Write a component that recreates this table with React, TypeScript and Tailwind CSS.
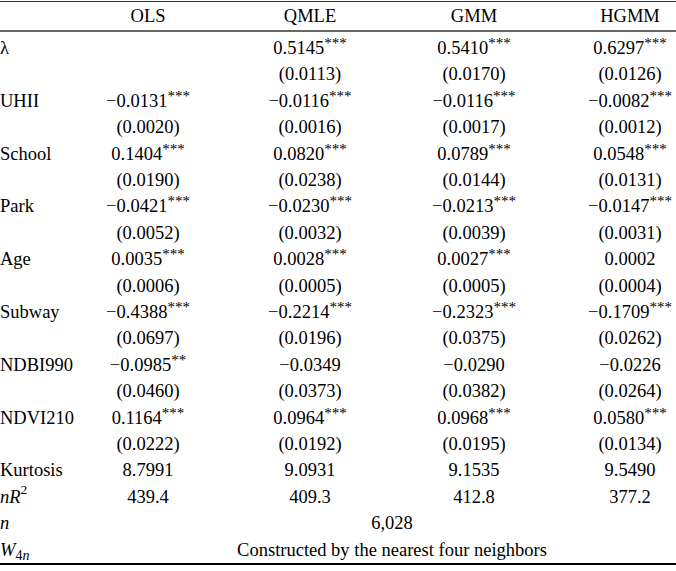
import type { ReactNode } from "react";

type Row = { label: ReactNode; vals?: string[]; span?: string };

const rows: Row[] = [
  { label: "λ", vals: ["", "0.5145***", "0.5410***", "0.6297***"] },
  { label: "", vals: ["", "(0.0113)", "(0.0170)", "(0.0126)"] },
  { label: "UHII", vals: ["−0.0131***", "−0.0116***", "−0.0116***", "−0.0082***"] },
  { label: "", vals: ["(0.0020)", "(0.0016)", "(0.0017)", "(0.0012)"] },
  { label: "School", vals: ["0.1404***", "0.0820***", "0.0789***", "0.0548***"] },
  { label: "", vals: ["(0.0190)", "(0.0238)", "(0.0144)", "(0.0131)"] },
  { label: "Park", vals: ["−0.0421***", "−0.0230***", "−0.0213***", "−0.0147***"] },
  { label: "", vals: ["(0.0052)", "(0.0032)", "(0.0039)", "(0.0031)"] },
  { label: "Age", vals: ["0.0035***", "0.0028***", "0.0027***", "0.0002"] },
  { label: "", vals: ["(0.0006)", "(0.0005)", "(0.0005)", "(0.0004)"] },
  { label: "Subway", vals: ["−0.4388***", "−0.2214***", "−0.2323***", "−0.1709***"] },
  { label: "", vals: ["(0.0697)", "(0.0196)", "(0.0375)", "(0.0262)"] },
  { label: "NDBI990", vals: ["−0.0985**", "−0.0349", "−0.0290", "−0.0226"] },
  { label: "", vals: ["(0.0460)", "(0.0373)", "(0.0382)", "(0.0264)"] },
  { label: "NDVI210", vals: ["0.1164***", "0.0964***", "0.0968***", "0.0580***"] },
  { label: "", vals: ["(0.0222)", "(0.0192)", "(0.0195)", "(0.0134)"] },
  { label: "Kurtosis", vals: ["8.7991", "9.0931", "9.1535", "9.5490"] },
  {
    label: (
      <span>
        <i>nR</i>
        <sup className="text-[13.5px] -top-[0.65em]">2</sup>
      </span>
    ),
    vals: ["439.4", "409.3", "412.8", "377.2"],
  },
  { label: <i>n</i>, span: "6,028" },
  {
    label: (
      <span>
        <i>W</i>
        <sub className="text-[14px] -bottom-[0.3em]">
          4<i>n</i>
        </sub>
      </span>
    ),
    span: "Constructed by the nearest four neighbors",
  },
];

const headers = ["OLS", "QMLE", "GMM", "HGMM"];
// gaps between the 80px value cells, so their centres land at 148 / 310 / 474 / 630
const gaps = ["ml-0", "ml-[82px]", "ml-[84px]", "ml-[76px]"];

function Value({ text }: { text: string }) {
  const m = text.match(/^(.*?)(\*+)$/);
  if (!m) return <span>{text}</span>;
  return (
    <span>
      {m[1]}
      <sup className="text-[15px] -top-[0.4em]">{m[2]}</sup>
    </span>
  );
}

export default function App() {
  return (
    <div className="w-[676px] h-[571px] overflow-hidden bg-white text-black font-['Liberation_Serif','Times_New_Roman',serif] text-[18.5px] leading-none flex flex-col pt-[1px] pb-[6px]">
      <div className="h-[1px] shrink-0 bg-[#333]" />
      <div className="flex h-[28px] shrink-0 items-center">
        <div className="w-[108px] shrink-0" />
        {headers.map((h, i) => (
          <div key={h} className={`w-[80px] shrink-0 flex justify-center whitespace-nowrap ${gaps[i]}`}>
            {h}
          </div>
        ))}
      </div>
      <div className="h-[2px] shrink-0 bg-[#666]" />
      <div className="flex-1 min-h-0 flex flex-col pt-[3px]">
        {rows.map((r, ri) => (
          <div key={ri} className="flex-1 min-h-0 flex items-center">
            <div className="w-[108px] shrink-0 whitespace-nowrap">{r.label}</div>
            {r.span ? (
              <div className="flex-1 flex justify-center whitespace-nowrap">{r.span}</div>
            ) : (
              r.vals!.map((v, i) => (
                <div key={i} className={`w-[80px] shrink-0 flex justify-center whitespace-nowrap ${gaps[i]}`}>
                  <Value text={v} />
                </div>
              ))
            )}
          </div>
        ))}
      </div>
      <div className="h-[2px] shrink-0 bg-black" />
    </div>
  );
}
